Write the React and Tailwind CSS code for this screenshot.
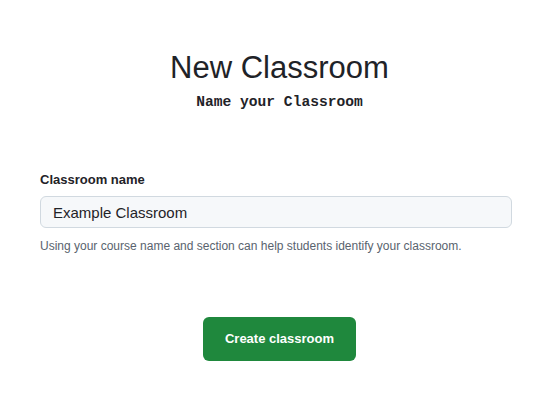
export default function App() {
  return (
    <div className="min-h-screen bg-white text-[#1f2328]" style={{ fontFamily: '"Liberation Sans", Arial, sans-serif' }}>
      <div className="pt-[46px] text-center">
        <h1 className="text-[31px] leading-[44px] font-normal">New Classroom</h1>
        <p className="mt-[3px] text-[14.6px] leading-[18px] font-bold" style={{ fontFamily: '"Liberation Mono", monospace' }}>
          Name your Classroom
        </p>
      </div>

      <div className="ml-10 w-[472px] mt-[59px]">
        <label className="block text-[13px] leading-[20px] font-bold mb-[6px]">Classroom name</label>
        <input
          type="text"
          defaultValue="Example Classroom"
          className="w-full h-8 px-3 rounded-md border border-[#d1d9e0] bg-[#f6f8fa] text-[15px] text-[#1f2328] outline-none"
        />
        <p className="mt-[9px] text-[12px] leading-[18px] text-[#59636e]">
          Using your course name and section can help students identify your classroom.
        </p>
      </div>

      <div className="flex justify-center mt-[62px]">
        <button className="h-[44px] w-[153px] rounded-md bg-[#1f883d] text-white text-[13px] font-bold">
          Create classroom
        </button>
      </div>
    </div>
  );
}
